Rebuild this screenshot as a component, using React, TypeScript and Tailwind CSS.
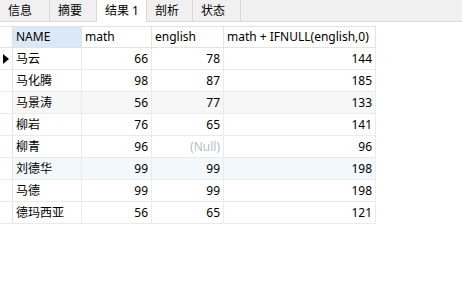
import React from 'react'

const rows: [string, number, number | null, number][] = [
  ['马云', 66, 78, 144],
  ['马化腾', 98, 87, 185],
  ['马景涛', 56, 77, 133],
  ['柳岩', 76, 65, 141],
  ['柳青', 96, null, 96],
  ['刘德华', 99, 99, 198],
  ['马德', 99, 99, 198],
  ['德玛西亚', 56, 65, 121],
]

const tabs = ['信息', '摘要', '结果 1', '剖析', '状态']
const tabW = ['w-[50px]', 'w-[47px]', 'w-[50px]', 'w-[46px]', 'w-[48px]']

// row 3 is hovered (gray), row 6 is selected (light blue)
function rowBg(i: number) {
  if (i === 2) return 'bg-[#f7f7f7]'
  if (i === 5) return 'bg-[#f3f8fd]'
  return 'bg-white'
}

export default function App() {
  return (
    <div className="h-[302px] w-[462px] bg-white text-[12px] text-black" style={{ fontFamily: '"Noto Sans", "Noto Sans CJK SC", sans-serif' }}>
      <div className="flex h-[22px] border-b border-[#d9d9d9] bg-[#f0f0f0]">
        {tabs.map((t, i) => (
          <div
            key={t}
            className={`${tabW[i]} flex items-center border-r border-[#d9d9d9] pl-[8px] leading-none ${i === 2 ? 'relative -mb-px h-[22px] bg-white' : ''}`}
          >
            {t}
          </div>
        ))}
      </div>
      <div className="mt-[4px] w-[376px]">
        <div className="flex h-[22px] border-y border-[#e3e3e3]">
          <div className="w-[13px] border-r border-[#e3e3e3]" />
          <div className="flex w-[69px] items-center border-r border-[#e3e3e3] bg-[#dbe9f7] pl-[3px]">NAME</div>
          <div className="flex w-[70px] items-center border-r border-[#e3e3e3] pl-[3px]">math</div>
          <div className="flex w-[72px] items-center border-r border-[#e3e3e3] pl-[3px]">english</div>
          <div className="flex w-[152px] items-center border-r border-[#e3e3e3] pl-[3px]">math + IFNULL(english,0)</div>
        </div>
        {rows.map((r, i) => (
          <div key={r[0]} className={`flex h-[22px] border-b border-[#ebebeb] ${rowBg(i)}`}>
            <div className="flex w-[13px] items-center border-r border-[#e3e3e3] bg-white pl-[3px]">
              {i === 0 && (
                <svg width="6" height="10" viewBox="0 0 6 10">
                  <path d="M0 0 L6 5 L0 10 Z" fill="#000" />
                </svg>
              )}
            </div>
            <div className="flex w-[69px] items-center border-r border-[#ebebeb] pl-[3px]">{r[0]}</div>
            <div className="flex w-[70px] items-center justify-end border-r border-[#ebebeb] pr-[3px]">{r[1]}</div>
            <div className="flex w-[72px] items-center justify-end border-r border-[#ebebeb] pr-[3px]">
              {r[2] === null ? <span className="text-[#b4bdcc]">(Null)</span> : r[2]}
            </div>
            <div className="flex w-[152px] items-center justify-end border-r border-[#ebebeb] pr-[3px]">{r[3]}</div>
          </div>
        ))}
      </div>
    </div>
  )
}
